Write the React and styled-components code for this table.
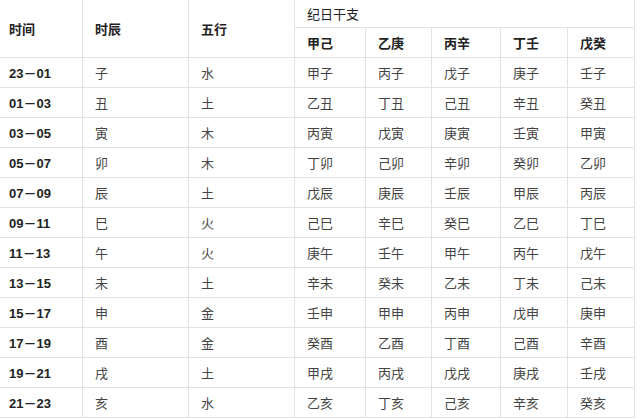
import React from "react";
import styled, { createGlobalStyle } from "styled-components";

const Global = createGlobalStyle`
  html, body { margin: 0; padding: 0; background: #fff; overflow: hidden; }
  body { font-family: "Liberation Sans", "Noto Sans CJK SC", sans-serif; }
`;

const Table = styled.table`
  border-collapse: collapse;
  table-layout: fixed;
  width: 638px;
  margin: -1px 0 0 -4px;
  font-size: 13px;
  color: #444;
`;

const Th = styled.th`
  border: 1px solid #e2e2e2;
  text-align: left;
  font-weight: bold;
  color: #222;
  padding: 0 0 0 ${(p) => (p.$pad ? p.$pad : 12)}px;
  height: ${(p) => p.$h || 29}px;
  vertical-align: middle;
  font-family: "Liberation Sans", "Noto Sans CJK SC", sans-serif;
`;

const Td = styled.td`
  border: 1px solid #e2e2e2;
  height: 29px;
  padding: 0 0 0 12px;
  vertical-align: middle;
  font-weight: ${(p) => (p.$bold ? "bold" : "normal")};
  color: ${(p) => (p.$bold ? "#222" : "#444")};
  white-space: nowrap;
`;

const widths = [86, 106, 106, 71, 66, 69, 67, 67];

const rows = [
  ["23－01", "子", "水", "甲子", "丙子", "戊子", "庚子", "壬子"],
  ["01－03", "丑", "土", "乙丑", "丁丑", "己丑", "辛丑", "癸丑"],
  ["03－05", "寅", "木", "丙寅", "戊寅", "庚寅", "壬寅", "甲寅"],
  ["05－07", "卯", "木", "丁卯", "己卯", "辛卯", "癸卯", "乙卯"],
  ["07－09", "辰", "土", "戊辰", "庚辰", "壬辰", "甲辰", "丙辰"],
  ["09－11", "巳", "火", "己巳", "辛巳", "癸巳", "乙巳", "丁巳"],
  ["11－13", "午", "火", "庚午", "壬午", "甲午", "丙午", "戊午"],
  ["13－15", "未", "土", "辛未", "癸未", "乙未", "丁未", "己未"],
  ["15－17", "申", "金", "壬申", "甲申", "丙申", "戊申", "庚申"],
  ["17－19", "酉", "金", "癸酉", "乙酉", "丁酉", "己酉", "辛酉"],
  ["19－21", "戌", "土", "甲戌", "丙戌", "戊戌", "庚戌", "壬戌"],
  ["21－23", "亥", "水", "乙亥", "丁亥", "己亥", "辛亥", "癸亥"],
];

export default function App() {
  return (
    <>
      <Global />
      <Table>
        <colgroup>
          {widths.map((w, i) => (
            <col key={i} style={{ width: w }} />
          ))}
        </colgroup>
        <thead>
          <tr>
            <Th rowSpan={2}>时间</Th>
            <Th rowSpan={2}>时辰</Th>
            <Th rowSpan={2}>五行</Th>
            <Th colSpan={5} $h={27} style={{ fontWeight: "normal" }}>纪日干支</Th>
          </tr>
          <tr>
            <Th>甲己</Th>
            <Th>乙庚</Th>
            <Th>丙辛</Th>
            <Th>丁壬</Th>
            <Th>戊癸</Th>
          </tr>
        </thead>
        <tbody>
          {rows.map((r, i) => (
            <tr key={i}>
              {r.map((c, j) => (
                <Td key={j} $bold={j === 0}>
                  {c}
                </Td>
              ))}
            </tr>
          ))}
        </tbody>
      </Table>
    </>
  );
}
